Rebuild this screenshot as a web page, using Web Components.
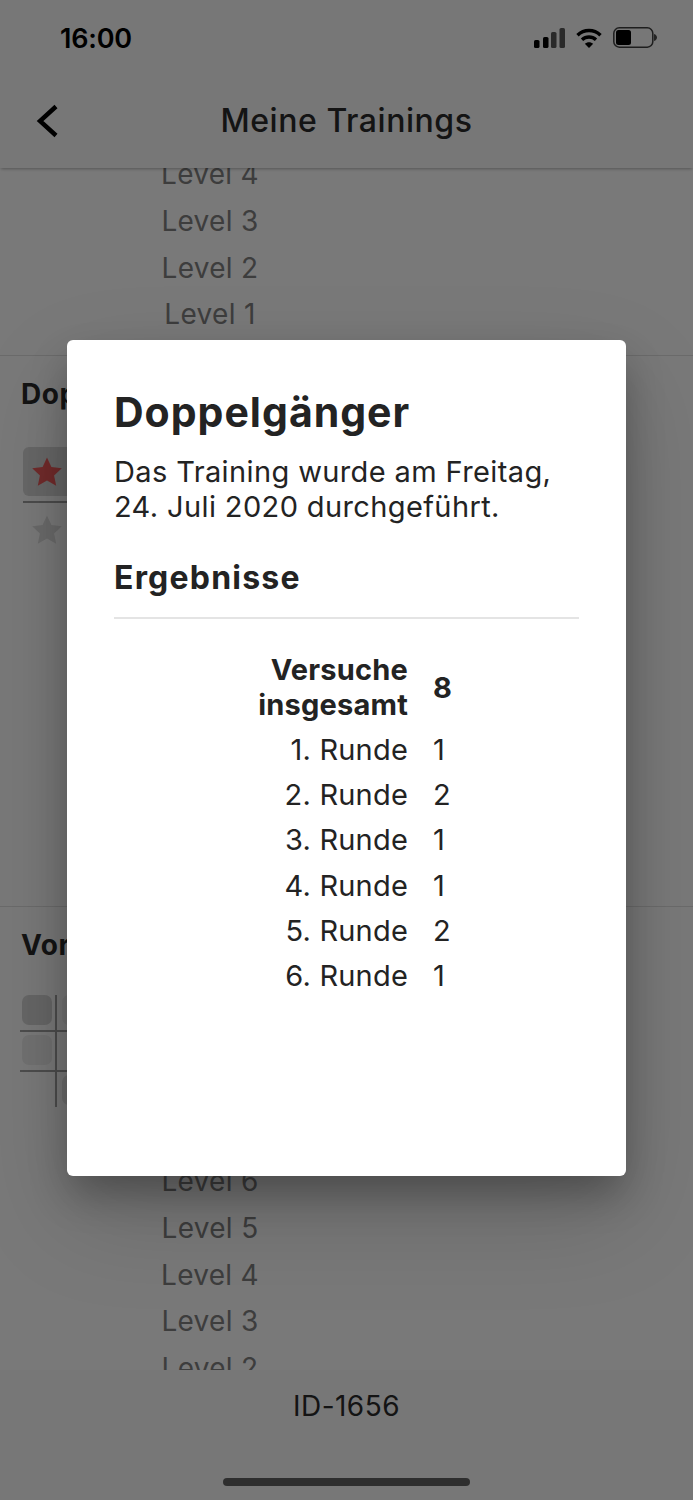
<!doctype html>
<html lang="de"><head><meta charset="utf-8"><title>Meine Trainings</title>
<style>
html,body{margin:0;padding:0;background:#f0f0f0}
body{font-family:Inter,"Noto Sans",sans-serif;width:693px;height:1500px;overflow:hidden;position:relative}
</style></head><body>
<training-app></training-app>
<script>
function def(name,css,html){
  customElements.define(name,class extends HTMLElement{
    constructor(){super();const r=this.attachShadow({mode:'open'});r.innerHTML='<style>'+css+'</style>'+html;}
  });
}
const STAR='<svg viewBox="0 0 30 30" width="30" height="30" aria-hidden="true"><path d="M15 .5l4.400 9.600 10.400 1.200-7.700 7.100 2.100 10.300L15 23.500l-9.200 5.200 2.100-10.300L.2 11.300l10.400-1.200z" fill="currentColor"/></svg>';

def('status-bar',`:host{display:flex;align-items:center;justify-content:space-between;height:75px;padding:2px 36px 0 60px;box-sizing:border-box;color:#000}
.t{font:600 27px/1 Inter,sans-serif;letter-spacing:-.2px}
.i{display:flex;align-items:center;gap:11px;margin-top:-2px}
svg{display:block}`,
`<span class="t">16:00</span><span class="i">
<svg width="31" height="20" viewBox="0 0 31 20"><g fill="#000"><rect x="0" y="12" width="5.500" height="8" rx="1.600"/><rect x="9" y="9" width="5.500" height="11" rx="1.600"/></g><g fill="#555"><rect x="17" y="4" width="5.500" height="16" rx="1.600"/><rect x="25.500" y="0" width="5.500" height="20" rx="1.600"/></g></svg>
<svg width="26" height="20" viewBox="0 0 26 20" fill="none" stroke="#000" stroke-width="3.400"><path d="M1.500 7.200C8 1 18 1 24.500 7.200"/><path d="M6 11.800c4-3.700 10-3.700 14 0"/><path d="M13 20l-4.200-4.300c2.300-2.100 6.100-2.100 8.400 0z" fill="#000" stroke="none"/></svg>
<svg width="44" height="21" viewBox="0 0 44 21"><rect x=".8" y=".8" width="39" height="19.400" rx="5.500" fill="none" stroke="#3d3d3d" stroke-width="1.500"/><rect x="3" y="3" width="15" height="15" rx="2.500" fill="#000"/><path d="M41 7c2 .6 3 2 3 3.500s-1 2.900-3 3.500z" fill="#4a4a4a"/></svg>
</span>`);

def('nav-bar',`:host{display:flex;align-items:center;justify-content:center;position:relative;height:93px;box-sizing:border-box;background:#f0f0f0;box-shadow:0 2px 3px -1px rgba(0,0,0,.3);z-index:1}
.b{position:absolute;left:36px;top:29px}
.t{font:500 32px/1 Inter,sans-serif;color:#2a2a2a;letter-spacing:.55px;margin-top:-1px}`,
`<svg class="b" width="24" height="34" viewBox="0 0 24 34" fill="none" stroke="#000" stroke-width="4.400"><path d="M20 2.500 4 17l16 14.500"/></svg><span class="t"><slot></slot></span>`);

def('level-list',`:host{display:flex;flex-direction:column;align-items:center;width:420px;color:#7c7c7c;font:400 28px/46.75px Inter,sans-serif;letter-spacing:.3px}`,`<slot></slot>`);

def('list-section',`:host{display:block;border-bottom:1px solid #d8d8d8;box-sizing:border-box;overflow:hidden}
h2{margin:0;padding:20px 0 0 21px;width:46px;overflow:hidden;white-space:nowrap;font:700 28px/36px Inter,sans-serif;color:#2a2a2a;letter-spacing:.6px}`,
`<h2><slot name="title"></slot></h2><slot></slot>`);

def('star-table',`:host{display:block;margin:35px 0 0 23px;width:44px;overflow:hidden;color:#d6d6d6}
.on{height:49px;background:#d0d0d0;border-radius:6px 0 0 6px;display:flex;align-items:center;padding-left:9px;box-sizing:border-box;color:#e45858}
.l{border-top:2px solid #9a9a9a;margin-top:5px}
.off{padding:12px 0 0 9px;box-sizing:border-box}
svg{display:block}`,
`<div class="on">${STAR}</div><div class="l"></div><div class="off">${STAR}</div>`);

def('tile-grid',`:host{display:grid;grid-template-columns:37px 1fr;grid-template-rows:37px 40px 35px;margin:32px 0 0 20px;width:47px;overflow:hidden}
div{box-sizing:border-box;position:relative}
.a{border-right:2px solid #9c9c9c}
.r{border-bottom:2px solid #9c9c9c}
i{display:block;border-radius:7px;width:30px;height:30px;position:absolute}
.x{background:#cfcfcf;left:2px;top:0}
.y{background:#e4e4e4;left:2px;top:3px}
.w{background:#e8e8e8;left:5px;top:0}
.z{background:#dcdcdc;left:5px;top:3px}`,
`<div class="a r"><i class="x"></i></div><div class="r"><i class="w"></i></div><div class="a r"><i class="y"></i></div><div class="r"></div><div class="a"></div><div><i class="z"></i></div>`);

def('foot-bar',`:host{display:block;height:130px;background:#f0f0f0;text-align:center;position:relative;color:#2a2a2a;font:400 28px/1 Inter,sans-serif;letter-spacing:.45px;padding-top:22px;box-sizing:border-box}
.h{position:absolute;left:223px;top:108px;width:247px;height:8px;border-radius:4px;background:#5e5e5e}`,
`<slot></slot><div class="h"></div>`);

def('result-dialog',`:host{display:block;position:absolute;left:67px;top:340px;width:559px;height:836px;box-sizing:border-box;padding:47px 47px 0 47px;background:#fff;border-radius:6px;color:#232323;z-index:3;box-shadow:0 20px 40px -4px rgba(0,0,0,.3),0 40px 100px rgba(0,0,0,.15)}
h1{margin:0;font:700 41px/50px Inter,sans-serif;letter-spacing:1px}
p{margin:17px 0 0;font:400 29px/35px Inter,sans-serif;letter-spacing:.38px}
h2{margin:34px 0 0;padding:0 0 19px;font:700 32px/40px Inter,sans-serif;letter-spacing:1.2px;border-bottom:2px solid #e4e4e4}
.g{display:grid;grid-template-columns:294px 1fr;column-gap:25px;margin-top:33px;font:400 29px/45.2px Inter,sans-serif;letter-spacing:.2px;align-items:center}
.g>.k{text-align:right}
.g>.b{font-weight:700;line-height:35px;padding-bottom:5px}
.g>.bv{font-weight:700;padding-bottom:3px}`,
`<h1>Doppelgänger</h1><p>Das Training wurde am Freitag,<br>24. Juli 2020 durchgeführt.</p><h2>Ergebnisse</h2>
<div class="g"><div class="k b">Versuche<br>insgesamt</div><div class="bv">8</div>
<div class="k">1. Runde</div><div>1</div><div class="k">2. Runde</div><div>2</div><div class="k">3. Runde</div><div>1</div><div class="k">4. Runde</div><div>1</div><div class="k">5. Runde</div><div>2</div><div class="k">6. Runde</div><div>1</div></div>`);

def('training-app',`:host{display:flex;flex-direction:column;height:1500px;background:#f0f0f0;position:relative;overflow:hidden}
.s{flex:1;min-height:0;overflow:hidden;background:#f5f5f5}
.scrim{position:absolute;inset:0;background:rgba(0,0,0,.505);z-index:2}
.sec2{height:551px}
.sec3 level-list{margin-top:51px}`,
`<status-bar></status-bar><nav-bar>Meine Trainings</nav-bar>
<div class="s">
<div style="margin-top:-16px"><list-section style="padding-bottom:17px"><level-list style="margin-top:-21px"><span>Level 4</span><span>Level 3</span><span>Level 2</span><span>Level 1</span></level-list></list-section></div>
<list-section class="sec2"><span slot="title">Doppelgänger</span><star-table></star-table></list-section>
<list-section class="sec3" style="border:0"><span slot="title">Vorwärts</span><tile-grid></tile-grid><level-list><span>Level 6</span><span>Level 5</span><span>Level 4</span><span>Level 3</span><span>Level 2</span></level-list></list-section>
</div>
<foot-bar>ID-1656</foot-bar>
<div class="scrim"></div>
<result-dialog></result-dialog>`);
</script>
</body></html>
